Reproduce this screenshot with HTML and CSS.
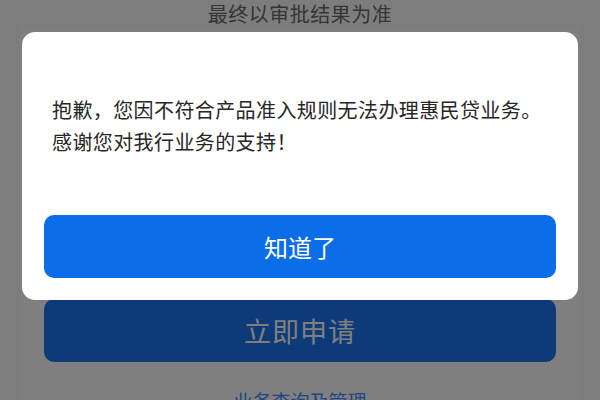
FILE: index.html
```html
<!DOCTYPE html>
<html lang="zh-CN">
<head>
<meta charset="utf-8">
<title>惠民贷</title>
<link rel="stylesheet" href="styles.css">
</head>
<body>
<div class="page">
  <div class="notice">最终以审批结果为准</div>
  <div class="card">
    <div class="apply">立即申请</div>
    <div class="link">业务查询及管理</div>
  </div>
</div>
<div class="mask"></div>
<div class="modal">
  <div class="msg">抱歉，您因不符合产品准入规则无法办理惠民贷业务。<br>感谢您对我行业务的支持！</div>
  <div class="ok">知道了</div>
</div>
</body>
</html>
```
FILE: styles.css
```css
html, body {
  margin: 0;
  padding: 0;
  width: 600px;
  height: 400px;
  overflow: hidden;
  font-family: "Noto Sans CJK SC", "Noto Sans", sans-serif;
}
body {
  background: #fbfbfb;
  position: relative;
}
.page {
  display: flex;
  flex-direction: column;
  align-items: center;
}
.notice {
  height: 28px;
  line-height: 28px;
  font-size: 20px;
  letter-spacing: 0.5px;
  color: #6a6a6a;
  text-align: center;
}
.card {
  align-self: stretch;
  margin: 0 20px;
  padding: 271px 24px 0;
  background: #ffffff;
  display: flex;
  flex-direction: column;
  align-items: stretch;
}
.apply {
  height: 63px;
  line-height: 63px;
  border-radius: 10px;
  background: #1a74f2;
  color: #ffffff;
  font-size: 27px;
  text-align: center;
  letter-spacing: 1px;
}
.link {
  margin-top: 25px;
  line-height: 28px;
  font-size: 19px;
  color: #3d8cff;
  text-align: center;
}
.mask {
  position: absolute;
  inset: 0;
  background: rgba(0, 0, 0, 0.5);
}
.modal {
  position: absolute;
  top: 32px;
  left: 22px;
  width: 556px;
  height: 268px;
  box-sizing: border-box;
  padding: 62px 22px 22px;
  background: #ffffff;
  border-radius: 13px;
  display: flex;
  flex-direction: column;
}
.msg {
  padding: 0 8px;
  font-size: 20px;
  letter-spacing: 0.4px;
  line-height: 32px;
  color: #262626;
  white-space: nowrap;
}
.ok {
  margin-top: 57px;
  height: 63px;
  line-height: 63px;
  border-radius: 10px;
  background: #0b6de8;
  color: #ffffff;
  font-size: 24px;
  text-align: center;
}
```
